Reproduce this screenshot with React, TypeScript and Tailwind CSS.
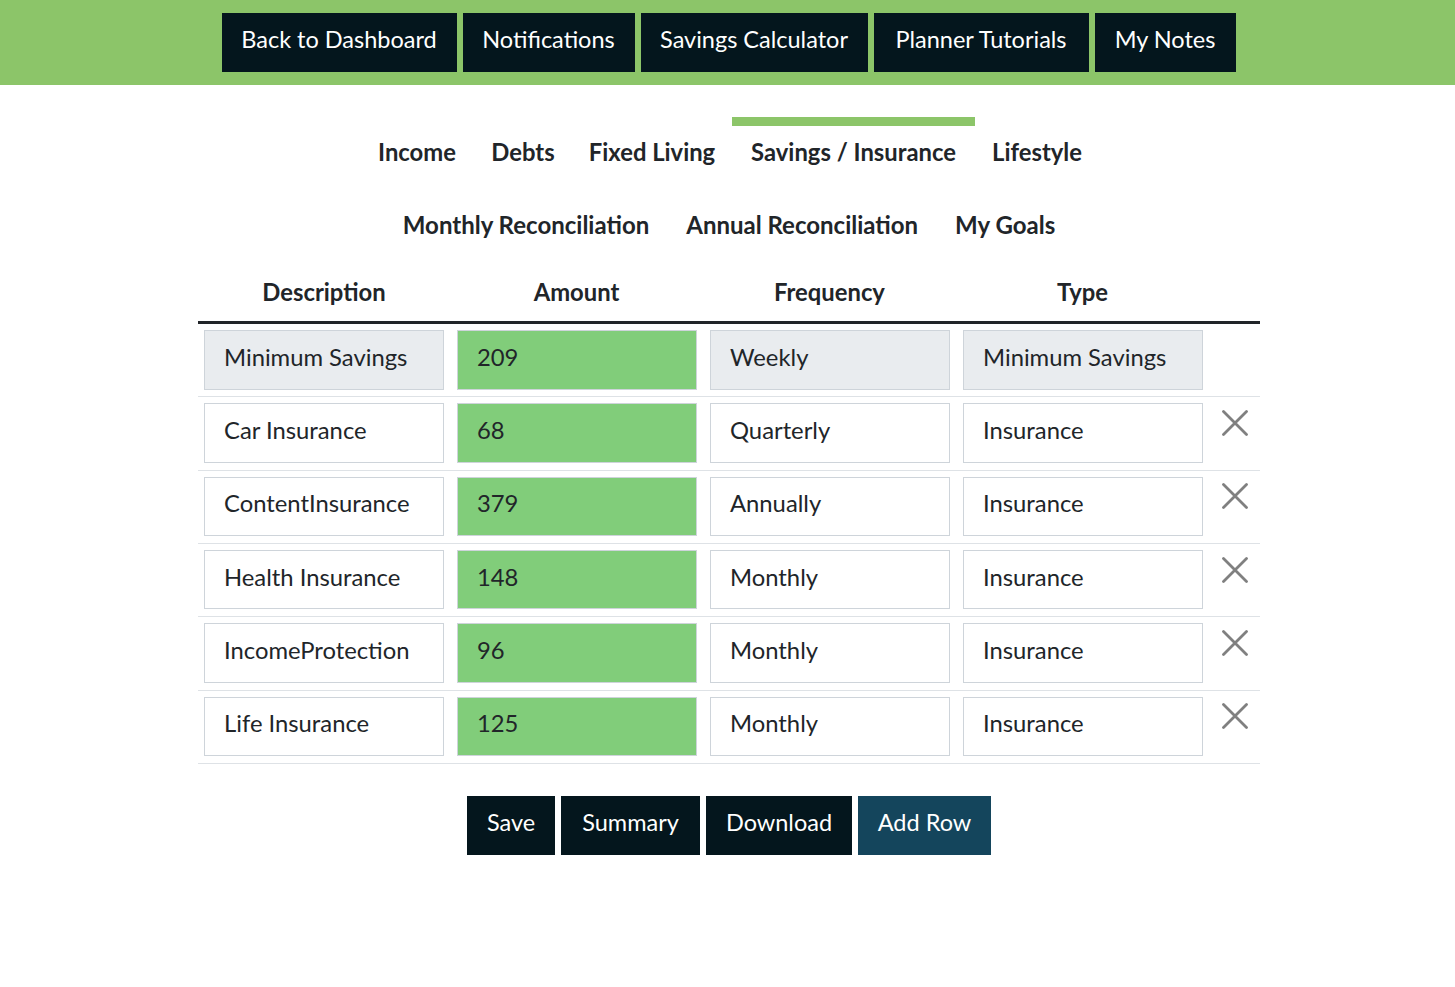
import React from 'react'

const navButtons = [
  { label: 'Back to Dashboard', width: 'w-[235px]' },
  { label: 'Notifications', width: 'w-[172px]' },
  { label: 'Savings Calculator', width: 'w-[227px]' },
  { label: 'Planner Tutorials', width: 'w-[215px]' },
  { label: 'My Notes', width: 'w-[141px]' },
]
const tabsTop = [
  { label: 'Income', width: 'w-[114px]' },
  { label: 'Debts', width: 'w-[98px]' },
  { label: 'Fixed Living', width: 'w-[160px]' },
  { label: 'Savings / Insurance', width: 'w-[243px]', active: true },
  { label: 'Lifestyle', width: 'w-[124px]' },
]
const tabsBottom = ['Monthly Reconciliation', 'Annual Reconciliation', 'My Goals']

const rows = [
  { description: 'Minimum Savings', amount: '209', frequency: 'Weekly', type: 'Minimum Savings', locked: true },
  { description: 'Car Insurance', amount: '68', frequency: 'Quarterly', type: 'Insurance' },
  { description: 'ContentInsurance', amount: '379', frequency: 'Annually', type: 'Insurance' },
  { description: 'Health Insurance', amount: '148', frequency: 'Monthly', type: 'Insurance' },
  { description: 'IncomeProtection', amount: '96', frequency: 'Monthly', type: 'Insurance' },
  { description: 'Life Insurance', amount: '125', frequency: 'Monthly', type: 'Insurance' },
]

const Button = ({ label, width, accent }: { label: string; width: string; accent?: boolean }) => (
  <button className={`h-[59px] pb-[6px] text-white text-[23.5px] ${width} ${accent ? 'bg-[#14455c]' : 'bg-[#04161d]'}`}>{label}</button>
)

const Field = ({ value, locked, green }: { value: string; locked?: boolean; green?: boolean }) => (
  <div
    className={`h-[59.5px] w-[240px] mr-[13px] pl-[19px] pb-[4.6px] flex items-center text-[23.8px] text-[#212529] border border-[#ced4da] ${
      green ? 'bg-[#81cd7a]' : locked ? 'bg-[#e9ecef]' : 'bg-white'
    }`}
  >
    {value}
  </div>
)

const RemoveIcon = () => (
  <svg className="ml-1.5 mt-[6.7px]" width="26" height="26" viewBox="0 0 26 26" fill="none" stroke="#808080" strokeWidth="2.8" strokeLinecap="round">
    <path d="M1.5 1.5L24.5 24.5M24.5 1.5L1.5 24.5" />
  </svg>
)

const App: React.FC = () => {
  return (
    <div className="min-h-[987px] bg-white font-['Lato',sans-serif]">
      {/* Top nav */}
      <div className="h-[85px] bg-[#8cc569] flex justify-center items-start pl-[2px] pt-[13px] gap-1.5">
        {navButtons.map((b) => (
          <Button key={b.label} label={b.label} width={b.width} />
        ))}
      </div>

      {/* Tabs */}
      <div className="mt-8 pl-1 flex justify-center">
        {tabsTop.map((t) => (
          <div
            key={t.label}
            className={`h-[73px] flex items-center justify-center font-bold text-[23.8px] text-[#212529] border-t-[9px] ${t.width} ${
              t.active ? 'border-[#8cc569]' : 'border-transparent'
            }`}
          >
            <span className="-mt-[11px]">{t.label}</span>
          </div>
        ))}
      </div>
      <div className="pl-[3px] flex justify-center">
        {tabsBottom.map((t) => (
          <div key={t} className="h-[73px] px-[18.5px] flex items-center font-bold text-[24px] text-[#212529] border-t-[9px] border-transparent">
            <span className="-mt-[12px]">{t}</span>
          </div>
        ))}
      </div>

      {/* Table */}
      <div className="w-[1062px] ml-[198px]">
        <div className="h-[61px] pt-[1px] flex items-center border-b-[3px] border-[#212529] font-bold text-[23.8px] text-[#212529]">
          <div className="w-[252px] text-center">Description</div>
          <div className="w-[253px] text-center">Amount</div>
          <div className="w-[253px] text-center">Frequency</div>
          <div className="w-[253px] text-center">Type</div>
        </div>
        {rows.map((r) => (
          <div key={r.description} className="h-[73.33px] flex items-start pl-1.5 pt-1.5 border-b border-[#dee2e6]">
            <Field value={r.description} locked={r.locked} />
            <Field value={r.amount} green />
            <Field value={r.frequency} locked={r.locked} />
            <Field value={r.type} locked={r.locked} />
            {!r.locked && <RemoveIcon />}
          </div>
        ))}
      </div>

      {/* Actions */}
      <div className="mt-8 pl-[3px] flex justify-center gap-1.5">
        <Button label="Save" width="w-[88px]" />
        <Button label="Summary" width="w-[139px]" />
        <Button label="Download" width="w-[146px]" />
        <Button label="Add Row" width="w-[133px]" accent />
      </div>
    </div>
  )
}

export default App
